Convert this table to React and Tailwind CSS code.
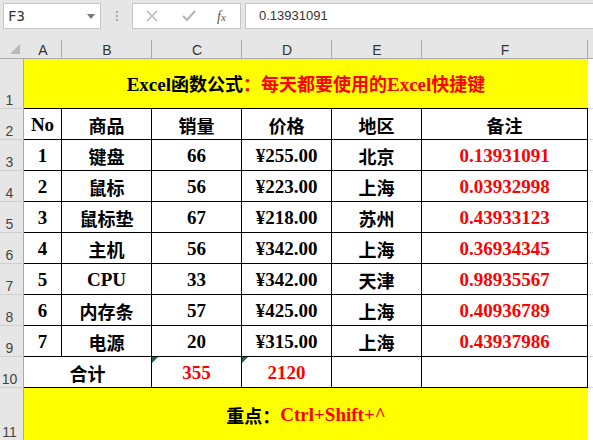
import React from 'react';

const latin = "font-['Liberation_Serif',serif] font-bold text-[19px]";
const cjk = "font-['Noto_Sans_CJK_SC',sans-serif] font-bold text-[18px]";

const colWidths = ['w-[38px]', 'w-[90px]', 'w-[90px]', 'w-[90px]', 'w-[90px]', 'w-[166px]'];
const letters = ['A', 'B', 'C', 'D', 'E', 'F'];

const rows = [
  ['1', '键盘', '66', '¥255.00', '北京', '0.13931091'],
  ['2', '鼠标', '56', '¥223.00', '上海', '0.03932998'],
  ['3', '鼠标垫', '67', '¥218.00', '苏州', '0.43933123'],
  ['4', '主机', '56', '¥342.00', '上海', '0.36934345'],
  ['5', 'CPU', '33', '¥342.00', '天津', '0.98935567'],
  ['6', '内存条', '57', '¥425.00', '上海', '0.40936789'],
  ['7', '电源', '20', '¥315.00', '上海', '0.43937986'],
];

// split text into CJK / latin runs so each gets its own font
const Mixed = ({ text }) =>
  text
    .split(/([\u3000-\u9fff\uff00-\uff5e]+)/)
    .filter(Boolean)
    .map((seg, i) =>
      /[\u3000-\u9fff\uff00-\uff5e]/.test(seg) ? (
        <span key={i} className={cjk}>{seg}</span>
      ) : (
        <span key={i} className={latin}>{seg}</span>
      )
    );

const RowHead = ({ n, h = 'h-[31px]' }) => (
  <div className={`${h} w-[24px] shrink-0 bg-[#e6e6e6] border-r border-b border-r-[#ababab] border-b-[#cfcfcf] flex items-end justify-center pr-[4px] pb-[1px] font-['Liberation_Sans',sans-serif] text-[14px] leading-none text-[#444]`}>
    {n}
  </div>
);

const Cell = ({ w, children, red, tri }) => (
  <div className={`${w} relative shrink-0 h-full border-r border-b border-black flex items-center justify-center pt-[2px] ${red ? 'text-[#ff0000]' : 'text-black'}`}>
    {tri && <div className="absolute left-0 top-0 w-0 h-0 border-t-[6px] border-r-[6px] border-t-[#1f6b3a] border-r-transparent" />}
    {children}
  </div>
);

const Tail = () => <div className="w-[5px] h-full border-b border-[#d8d8d8]" />;

export default function App() {
  return (
    <div className="w-[593px] h-[440px] overflow-hidden bg-white">
      {/* formula bar */}
      <div className="h-[38px] bg-[#e6e6e6] flex items-start pt-[3px] pl-[3px]">
        <div className="w-[98px] h-[26px] bg-white border border-[#c6c6c6] flex items-center justify-between pl-[4px] pr-[5px]">
          <span className="font-['DejaVu_Sans_Mono',monospace] text-[14px] text-[#333]">F3</span>
          <svg width="8" height="5" viewBox="0 0 8 5"><path d="M0 0h8L4 5z" fill="#777" /></svg>
        </div>
        <div className="w-[31px] h-[26px] flex flex-col items-center justify-center gap-[2px]">
          <div className="w-[2px] h-[2px] bg-[#aaa]" />
          <div className="w-[2px] h-[2px] bg-[#aaa]" />
          <div className="w-[2px] h-[2px] bg-[#aaa]" />
        </div>
        <div className="w-[109px] h-[26px] bg-white border border-[#c6c6c6] flex items-center pl-[13px]">
          <svg width="12" height="12" viewBox="0 0 12 12"><path d="M1 1l10 10M11 1L1 11" stroke="#b4b4b4" strokeWidth="1.4" /></svg>
          <svg className="ml-[24px]" width="14" height="12" viewBox="0 0 14 12"><path d="M1 6l4 4 8-9" stroke="#b4b4b4" strokeWidth="2" fill="none" /></svg>
          <span className="ml-[21px] font-['Liberation_Serif',serif] italic text-[14px] text-[#555]">f<span className="text-[11px]">x</span></span>
        </div>
        <div className="ml-[4px] flex-1 h-[26px] bg-white border border-r-0 border-[#c6c6c6] flex items-center pl-[13px] font-['Liberation_Sans',sans-serif] text-[13px] text-[#333]">
          0.13931091
        </div>
      </div>

      {/* column headers */}
      <div className="flex h-[21px] bg-[#e6e6e6] border-b border-[#ababab]">
        <div className="w-[24px] h-full relative">
          <svg className="absolute left-[10px] top-[6px]" width="10" height="10" viewBox="0 0 10 10"><path d="M10 0v10H0z" fill="#b9b9b9" /></svg>
        </div>
        {letters.map((l, i) => (
          <div key={l} className={`${colWidths[i]} h-full flex items-end justify-center pb-[1px] font-['Liberation_Sans',sans-serif] text-[14px] leading-none text-[#333] relative`}>
            {l}
            <div className="absolute right-0 bottom-0 h-[18px] w-px bg-[#ababab]" />
          </div>
        ))}
        <div className="w-[5px]" />
      </div>

      {/* row 1 title */}
      <div className="flex h-[50px]">
        <RowHead n="1" h="h-[50px]" />
        <div className="w-[564px] h-full bg-[#ffff00] border-b border-black flex items-center justify-center pt-[2px]">
          <span className="text-black"><Mixed text="Excel函数公式" /></span>
          <span className="text-[#ff0000]"><Mixed text="：每天都要使用的Excel快捷键" /></span>
        </div>
        <Tail />
      </div>

      {/* row 2 headers */}
      <div className="flex h-[31px]">
        <RowHead n="2" />
        {['No', '商品', '销量', '价格', '地区', '备注'].map((t, i) => (
          <Cell key={t} w={colWidths[i]}><Mixed text={t} /></Cell>
        ))}
        <Tail />
      </div>

      {rows.map((r, ri) => (
        <div key={ri} className="flex h-[31px]">
          <RowHead n={String(ri + 3)} />
          {r.map((t, i) => (
            <Cell key={i} w={colWidths[i]} red={i === 5}><Mixed text={t} /></Cell>
          ))}
          <Tail />
        </div>
      ))}

      {/* row 10 totals */}
      <div className="flex h-[31px]">
        <RowHead n="10" />
        <Cell w="w-[128px]"><Mixed text="合计" /></Cell>
        <Cell w="w-[90px]" red tri><Mixed text="355" /></Cell>
        <Cell w="w-[90px]" red tri><Mixed text="2120" /></Cell>
        <Cell w="w-[90px]" />
        <Cell w="w-[166px]" />
        <Tail />
      </div>

      {/* row 11 */}
      <div className="flex h-[53px]">
        <RowHead n="11" h="h-[53px]" />
        <div className="w-[564px] h-full bg-[#ffff00] flex items-center justify-center pt-[2px]">
          <span className="text-black"><Mixed text="重点：" /></span>
          <span className="text-[#ff0000]"><Mixed text="Ctrl+Shift+^" /></span>
        </div>
        <div className="w-[5px] h-full" />
      </div>
    </div>
  );
}
